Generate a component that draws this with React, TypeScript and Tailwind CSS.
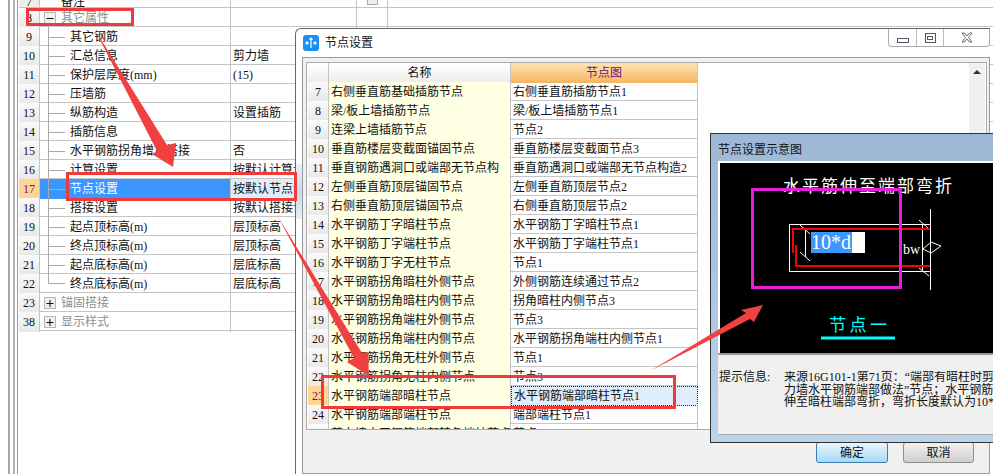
const line = "border-[#c4c4c4]"

const leftRows: [string, string, string, string?][] = [
    ["9", "其它钢筋", ""],
    ["10", "汇总信息", "剪力墙"],
    ["11", "保护层厚度(mm)", "(15)"],
    ["12", "压墙筋", ""],
    ["13", "纵筋构造", "设置插筋"],
    ["14", "插筋信息", ""],
    ["15", "水平钢筋拐角增加搭接", "否"],
    ["16", "计算设置", "按默认计算设置"],
    ["17", "节点设置", "按默认节点设置"],
    ["18", "搭接设置", "按默认搭接设置"],
    ["19", "起点顶标高(m)", "层顶标高"],
    ["20", "终点顶标高(m)", "层顶标高"],
    ["21", "起点底标高(m)", "层底标高"],
    ["22", "终点底标高(m)", "层底标高"],
]

const nodeRows: [string, string, string][] = [
    ["7", "右侧垂直筋基础插筋节点", "右侧垂直筋插筋节点1"],
    ["8", "梁/板上墙插筋节点", "梁/板上墙插筋节点1"],
    ["9", "连梁上墙插筋节点", "节点2"],
    ["10", "垂直筋楼层变截面锚固节点", "垂直筋楼层变截面节点3"],
    ["11", "垂直钢筋遇洞口或端部无节点构", "垂直筋遇洞口或端部无节点构造2"],
    ["12", "左侧垂直筋顶层锚固节点", "左侧垂直筋顶层节点2"],
    ["13", "右侧垂直筋顶层锚固节点", "右侧垂直筋顶层节点2"],
    ["14", "水平钢筋丁字暗柱节点", "水平钢筋丁字暗柱节点1"],
    ["15", "水平钢筋丁字端柱节点", "水平钢筋丁字端柱节点1"],
    ["16", "水平钢筋丁字无柱节点", "节点1"],
    ["17", "水平钢筋拐角暗柱外侧节点", "外侧钢筋连续通过节点2"],
    ["18", "水平钢筋拐角暗柱内侧节点", "拐角暗柱内侧节点3"],
    ["19", "水平钢筋拐角端柱外侧节点", "节点3"],
    ["20", "水平钢筋拐角端柱内侧节点", "水平钢筋拐角端柱内侧节点1"],
    ["21", "水平钢筋拐角无柱外侧节点", "节点1"],
    ["22", "水平钢筋拐角无柱内侧节点", "节点3"],
    ["23", "水平钢筋端部暗柱节点", "水平钢筋端部暗柱节点1"],
    ["24", "水平钢筋端部端柱节点", "端部端柱节点1"],
    ["25", "剪力墙水平钢筋端部转角端柱节点", "节点1"],
]

function LeftRow({ num, children, value, selected }: { num: string; children: React.ReactNode; value?: string; selected?: boolean }) {
    return (
        <div className={`grid h-[19px] grid-cols-[21px_191px_126px_31px] border-b ${line} leading-[20px] whitespace-nowrap`}>
            <div className={`border-r ${line} text-center ${selected ? "bg-[#ffd591] text-[#7a0a8a]" : "bg-gradient-to-b from-[#fafafa] to-[#e8e8e8]"}`}>{num}</div>
            <div className={`border-r ${line} ${selected ? "bg-[#3c96ff] text-white" : ""}`}>{children}</div>
            <div className={`border-r ${line} overflow-hidden pl-[2px] ${selected ? "bg-[#deecfb]" : ""}`}>{value}</div>
            <div className={`border-r ${line}`}></div>
        </div>
    )
}

function TreeLeaf({ text, last }: { text: string; last?: boolean }) {
    return (
        <div className="flex h-full items-center pl-[8px]">
            {last ? (
                <span className="flex h-[10px] w-[17px] items-end self-start border-l border-[#aaa]">
                    <span className="h-px w-full bg-[#aaa]"></span>
                </span>
            ) : (
                <span className="flex h-full w-[17px] items-center border-l border-[#aaa]">
                    <span className="h-px w-full bg-[#aaa]"></span>
                </span>
            )}
            <span className="ml-[5px]">{text}</span>
        </div>
    )
}

function TreeGroup({ text, open }: { text: string; open?: boolean }) {
    return (
        <div className="flex h-full items-center pl-[4px] text-[#8f8f8f]">
            <svg width="12" height="12" viewBox="0 0 12 12" className="shrink-0">
                <rect x="0.5" y="0.5" width="11" height="11" fill="#efefef" stroke="#b8b8b8" />
                <path d={open ? "M2.5 6.5h7" : "M2.5 6.5h7M6 3v7"} stroke="#111" strokeWidth="1" />
            </svg>
            <span className="ml-[5px]">{text}</span>
        </div>
    )
}

function LeftPanel() {
    return (
        <div className="h-[474px] pl-[8px]">
            <div className="h-full border-l-2 border-[#a8a8a8] pl-[3px]">
                <div className="h-full border-l-2 border-[#b4b4b4] pl-[2px]">
                    <div className="h-full border-l border-[#999] pl-[1px]">
                        <div className={`grid h-[8px] grid-cols-[21px_191px_126px_31px] overflow-hidden border-b ${line} leading-[4px] whitespace-nowrap`}>
                            <div className={`border-r ${line} bg-[#eeeeee] text-center`}>7</div>
                            <div className={`border-r ${line} pl-[21px]`}>备注</div>
                            <div className={`border-r ${line}`}></div>
                            <div className={`border-r ${line} pl-[10px]`}>
                                <div className="h-[5px] w-[11px] border-x border-b border-[#aaa] bg-[#eee]"></div>
                            </div>
                        </div>
                        <LeftRow num="8"><TreeGroup text="其它属性" open /></LeftRow>
                        {leftRows.map(([num, text, value], i) => (
                            <LeftRow key={num} num={num} value={value} selected={num === "17"}>
                                <TreeLeaf text={text} last={i === leftRows.length - 1} />
                            </LeftRow>
                        ))}
                        <LeftRow num="23"><TreeGroup text="锚固搭接" /></LeftRow>
                        <LeftRow num="38"><TreeGroup text="显示样式" /></LeftRow>
                    </div>
                </div>
            </div>
        </div>
    )
}

function NodeTable() {
    return (
        <div className="w-[390px] shrink-0 whitespace-nowrap">
            <div className={`grid h-[19px] grid-cols-[21px_182px_187px] border-b ${line} leading-[20px]`}>
                <div className={`border-r ${line} bg-gradient-to-b from-white to-[#ececec]`}></div>
                <div className={`border-r ${line} bg-gradient-to-b from-white to-[#ececec] text-center`}>名称</div>
                <div className={`border-r ${line} bg-gradient-to-b from-[#fde4b4] to-[#f5b460] text-center text-[#7a0a8a]`}>节点图</div>
            </div>
            {nodeRows.map(([num, name, value]) => {
                const active = num === "23"
                return (
                    <div key={num} className={`grid h-[19px] grid-cols-[21px_182px_187px] border-b ${line} leading-[20px]`}>
                        <div className={`border-r ${line} text-center ${active ? "bg-[#ffd591] text-[#7a0a8a]" : "bg-gradient-to-b from-[#fafafa] to-[#e8e8e8]"}`}>{num}</div>
                        <div className={`border-r ${line} bg-[#ffffe4] pl-[2px]`}>{name}</div>
                        <div className={`pl-[2px] ${active ? "border border-dotted border-[#222] bg-[#deecfb] leading-[18px]" : `border-r ${line}`}`}>{value}</div>
                    </div>
                )
            })}
        </div>
    )
}

function CaptionButtons() {
    return (
        <div className="flex h-[18px] self-start rounded-b-[4px] border-x border-b border-[#aaa] bg-white">
            <div className="flex w-[28px] items-center justify-center border-r border-[#bbb] pt-[6px]">
                <div className="h-[5px] w-[12px] border border-[#556]"></div>
            </div>
            <div className="flex w-[27px] items-center justify-center border-r border-[#bbb]">
                <div className="flex h-[10px] w-[11px] items-center justify-center border border-[#556]">
                    <div className="h-[4px] w-[6px] border border-[#556]"></div>
                </div>
            </div>
            <div className="flex w-[45px] items-center justify-center">
                <svg width="12" height="11" viewBox="0 0 12 11">
                    <path d="M1 1h2.5L6 4l2.5-3H11L7.5 5.5 11 10H8.5L6 7l-2.5 3H1l3.5-4.5z" fill="#fff" stroke="#667" strokeWidth="1" />
                </svg>
            </div>
        </div>
    )
}

function NodeDialog() {
    return (
        <div className="absolute top-[28px] left-[295px] h-[446px] w-[695px] rounded-tl-[6px] border-t border-l border-[#666] bg-white">
            <div className="absolute top-[135px] left-0 h-[55px] w-[6px] bg-gradient-to-b from-[#e6f0f9] via-[#c6d9ec] to-[#e6f0f9]"></div>
            <div className="flex h-[28px] items-center justify-between">
                <div className="flex items-center pl-[7px]">
                    <div className="flex h-[16px] w-[16px] items-center justify-center rounded-[3px] bg-[#1b90f2]">
                        <svg width="12" height="12" viewBox="0 0 12 12" fill="none" stroke="#fff" strokeWidth="1.2">
                            <path d="M6 1v10M1 6h3M8 6h3M4.5 2.5 6 1l1.5 1.5M2.5 4.5 1 6l1.5 1.5M9.5 4.5 11 6 9.5 7.5" />
                        </svg>
                    </div>
                    <span className="ml-[6px]">节点设置</span>
                </div>
                <CaptionButtons />
            </div>
            <div className="ml-[6px] h-[417px] w-[688px] border border-[#999] bg-[#f0f0f0] pt-[4px] pl-[3px]">
                <div className="flex h-[368px] w-[681px] overflow-hidden border border-[#aaa] bg-white pl-[1px]">
                    <NodeTable />
                    <div className="flex-1"></div>
                    <div className="mr-[1px] flex w-[16px] justify-center bg-[#f0f0f0] pt-[7px]">
                        <div className="h-0 w-0 border-x-[4px] border-b-[4px] border-x-transparent border-b-[#333]"></div>
                    </div>
                </div>
                <div className="mt-[12px] flex w-[668px] justify-end gap-[15px]">
                    <button className="h-[21px] w-[72px] rounded-[3px] border border-[#3c7fb1] bg-gradient-to-b from-[#eaf6fd] to-[#a7d9f5]">确定</button>
                    <button className="h-[21px] w-[71px] rounded-[3px] border border-[#8e8e8e] bg-gradient-to-b from-[#f2f2f2] to-[#cfcfcf]">取消</button>
                </div>
            </div>
        </div>
    )
}

function Diagram() {
    return (
        <div className="relative ml-0 h-[190px] border-l-2 border-white bg-black">
            <svg width="273" height="190" viewBox="0 0 273 190" className="block" fill="none">
                <text x="63" y="29" fontSize="17" letterSpacing="2" fill="#fff" stroke="none">水平筋伸至端部弯折</text>
                <path d="M69.5 61.5H210M69.5 108.5H210M69.5 61v48M202.5 61v48M210.5 46v81M85.5 66v28M80 62l10 9M80 89l10 9M199 57l10 9M199 105l10 8M203 86l8-7 10 4-10 7z" stroke="#fff" strokeWidth="1" />
                <path d="M210 66H73v24M76 82v21h134" stroke="#f00" strokeWidth="2" />
                <text x="183" y="91" fontSize="14" fill="#fff" stroke="none">bw</text>
                <text x="109" y="168" fontSize="17" letterSpacing="3.5" fill="#00ffff" stroke="none">节点一</text>
                <path d="M101 175h74" stroke="#00ffff" strokeWidth="3" />
            </svg>
            <div className="absolute top-[69px] left-[91px] h-[21px] w-[54px] bg-white text-[20px] leading-[21px] text-white">
                <span className="inline-block h-full w-[41px] bg-[#3d97ff]">10*d</span>
            </div>
        </div>
    )
}

function PreviewWindow() {
    return (
        <div className="absolute top-[133px] left-[710px] h-[310px] w-[290px] border border-[#333] bg-gradient-to-b from-[#9db8d6] to-[#bcd3ec]">
            <div className="h-[27px] pl-[7px] leading-[33px]">节点设置示意图</div>
            <div className="ml-[7px] border-t-2 border-white">
                <Diagram />
                <div className="flex h-[82px] border-t-2 border-b border-t-[#999] border-b-[#aaa] bg-[#f0f0f0] pt-[16px] pl-[1px] leading-[12.5px] whitespace-nowrap">
                    <div className="w-[65px] shrink-0">提示信息:</div>
                    <div className="w-[209px] overflow-hidden">
                        <div>来源16G101-1第71页：“端部有暗柱时剪</div>
                        <div>力墙水平钢筋端部做法”节点；水平钢筋</div>
                        <div>伸至暗柱端部弯折，弯折长度默认为10*d</div>
                    </div>
                </div>
            </div>
        </div>
    )
}

function Annotations() {
    return (
        <>
            <div className="absolute top-[8px] left-[26px] h-[18px] w-[108px] border-[3px] border-[#f03a3a]"></div>
            <div className="absolute top-[172px] left-[66px] h-[29px] w-[231px] border-[3px] border-[#f03a3a]"></div>
            <div className="absolute top-[375px] left-[321px] h-[34px] w-[355px] border-[3px] border-[#f03a3a]"></div>
            <div className="absolute top-[188px] left-[751px] h-[101px] w-[151px] border-[3px] border-[#e61fd9]"></div>
            <svg width="993" height="474" viewBox="0 0 993 474" className="pointer-events-none absolute top-0 left-0" fill="#f04040">
                <polygon points="95,30 167,145 176,143 173,167 152,154 157,151" />
                <polygon points="278,217 362,353 368,352 369,376 347,362 354,358" />
                <polygon points="650,371 746,313 741,310 763,305 754,322 750,319" />
            </svg>
        </>
    )
}

export default function App() {
    return (
        <main className="relative h-[474px] w-[993px] overflow-hidden bg-white text-[12px] text-[#111] [font-family:'Liberation_Serif','Noto_Sans_CJK_SC',sans-serif]">
            <LeftPanel />
            <NodeDialog />
            <PreviewWindow />
            <Annotations />
        </main>
    )
}
